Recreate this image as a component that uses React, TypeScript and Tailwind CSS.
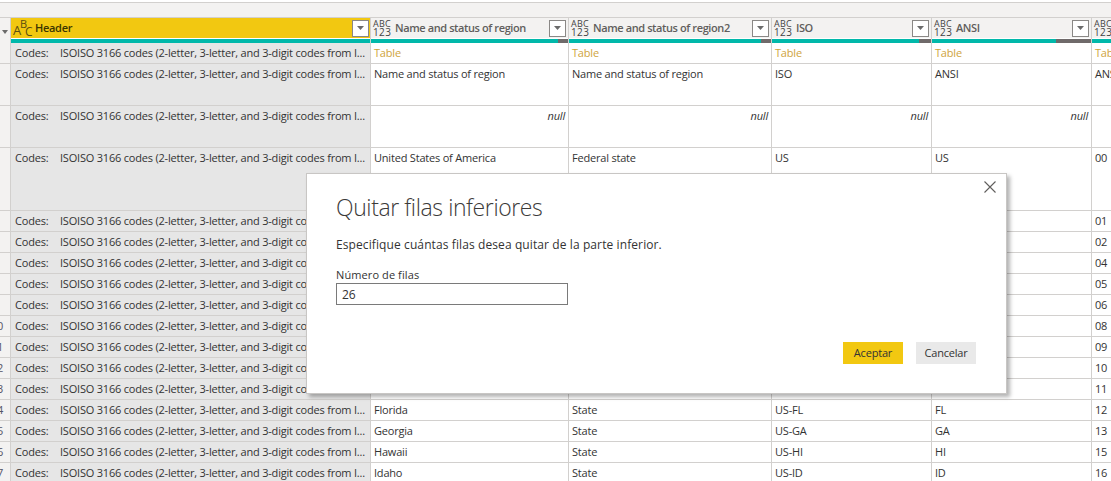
import React from 'react';

const gridCols = 'grid grid-cols-[11px_360px_198px_203px_160px_160px_19px]';
const fontStack = { fontFamily: '"Open Sans", "Noto Sans", sans-serif' };

const codesText = 'ISOISO 3166 codes (2-letter, 3-letter, and 3-digit codes from I...';

type Row = {
    idx: number;
    h: string;
    name?: string;
    status?: string;
    iso?: string;
    ansi?: string;
    last?: string;
    isNull?: boolean;
    gold?: boolean;
};

const rows: Row[] = [
    { idx: 1, h: 'h-[21px]', name: 'Table', status: 'Table', iso: 'Table', ansi: 'Table', last: 'Table', gold: true },
    { idx: 2, h: 'h-[42px]', name: 'Name and status of region', status: 'Name and status of region', iso: 'ISO', ansi: 'ANSI', last: 'ANSI' },
    { idx: 3, h: 'h-[42px]', isNull: true },
    { idx: 4, h: 'h-[63px]', name: 'United States of America', status: 'Federal state', iso: 'US', ansi: 'US', last: '00' },
    { idx: 5, h: 'h-[21px]', name: 'Alabama', status: 'State', iso: 'US-AL', ansi: 'AL', last: '01' },
    { idx: 6, h: 'h-[21px]', name: 'Alaska', status: 'State', iso: 'US-AK', ansi: 'AK', last: '02' },
    { idx: 7, h: 'h-[21px]', name: 'Arizona', status: 'State', iso: 'US-AZ', ansi: 'AZ', last: '04' },
    { idx: 8, h: 'h-[21px]', name: 'Arkansas', status: 'State', iso: 'US-AR', ansi: 'AR', last: '05' },
    { idx: 9, h: 'h-[21px]', name: 'California', status: 'State', iso: 'US-CA', ansi: 'CA', last: '06' },
    { idx: 10, h: 'h-[21px]', name: 'Colorado', status: 'State', iso: 'US-CO', ansi: 'CO', last: '08' },
    { idx: 11, h: 'h-[21px]', name: 'Connecticut', status: 'State', iso: 'US-CT', ansi: 'CT', last: '09' },
    { idx: 12, h: 'h-[21px]', name: 'Delaware', status: 'State', iso: 'US-DE', ansi: 'DE', last: '10' },
    { idx: 13, h: 'h-[21px]', name: 'District of Columbia', status: 'District', iso: 'US-DC', ansi: 'DC', last: '11' },
    { idx: 14, h: 'h-[21px]', name: 'Florida', status: 'State', iso: 'US-FL', ansi: 'FL', last: '12' },
    { idx: 15, h: 'h-[21px]', name: 'Georgia', status: 'State', iso: 'US-GA', ansi: 'GA', last: '13' },
    { idx: 16, h: 'h-[21px]', name: 'Hawaii', status: 'State', iso: 'US-HI', ansi: 'HI', last: '15' },
    { idx: 17, h: 'h-[21px]', name: 'Idaho', status: 'State', iso: 'US-ID', ansi: 'ID', last: '16' },
];

function FilterButton() {
    return (
        <div className="w-[17px] h-[17px] shrink-0 bg-white border border-[#8a8886] flex items-center justify-center">
            <svg width="7" height="4" viewBox="0 0 7 4">
                <path d="M0 0h7L3.5 4z" fill="#6b6b6b" />
            </svg>
        </div>
    );
}

function TypeIcon() {
    return (
        <div className="w-[17px] shrink-0 flex flex-col text-[#444] leading-[9px] font-normal">
            <span className="text-[9px] tracking-[0.2px]">ABC</span>
            <span className="text-[10px] tracking-[0.4px]">123</span>
        </div>
    );
}

function ColumnHeader({ label, teal }: { label: string; teal: string }) {
    return (
        <div className="h-[25px] border-r border-[#d2d0ce] flex flex-col">
            <div className="h-[20px] pl-[2px] pr-[2px] flex items-center bg-[#f3f2f1]">
                <TypeIcon />
                <span className="ml-[5px] flex-1 min-w-0 text-[11px] tracking-[-0.4px] font-semibold text-[#605e5c] whitespace-nowrap">{label}</span>
                <FilterButton />
            </div>
            <div className="mt-[1px] h-[4px] bg-[#6f6a6a]">
                <div className={`h-full bg-[#01b8aa] ${teal}`} />
            </div>
        </div>
    );
}

function Cell({ text, gold, isNull }: { text?: string; gold?: boolean; isNull?: boolean }) {
    if (isNull) {
        return (
            <div className="border-r border-[#d2d0ce] px-[3px] pt-[1px] text-right italic text-[#333] h-full">null</div>
        );
    }
    return (
        <div className={`border-r border-[#d2d0ce] pl-[3px] pt-[1px] h-full overflow-hidden whitespace-nowrap ${gold ? 'text-[#cfa43c]' : 'text-[#333]'}`}>
            {text}
        </div>
    );
}

function DataRow({ row }: { row: Row }) {
    return (
        <div className={`${gridCols} ${row.h} border-b border-[#d2d0ce] text-[11px] tracking-[-0.2px] leading-[18px]`}>
            <div className="bg-[#f3f2f1] border-r border-[#d2d0ce] pr-[7px] pt-[1px] text-[#556] flex justify-end overflow-hidden">
                {/* single digits sit left of the crop, only the tail of two digit numbers shows */}
                <span>{row.idx >= 10 ? row.idx : ''}</span>
            </div>
            <div className="bg-[#e6e6e6] border-r border-[#d2d0ce] pl-[4px] pt-[1px] flex text-[#333] whitespace-nowrap overflow-hidden">
                <span className="w-[45px] shrink-0">Codes:</span>
                <span>{codesText}</span>
            </div>
            <Cell text={row.name} gold={row.gold} isNull={row.isNull} />
            <Cell text={row.status} gold={row.gold} isNull={row.isNull} />
            <Cell text={row.iso} gold={row.gold} isNull={row.isNull} />
            <Cell text={row.ansi} gold={row.gold} isNull={row.isNull} />
            <div className={`pl-[3px] pt-[1px] overflow-hidden whitespace-nowrap ${row.gold ? 'text-[#cfa43c]' : 'text-[#333]'}`}>
                {row.isNull ? '' : row.last}
            </div>
        </div>
    );
}

function RemoveRowsDialog() {
    return (
        <div className="absolute left-[306px] top-[173px] w-[701px] h-[221px] bg-white border border-[#c8c6c4] shadow-[3px_3px_4px_rgba(0,0,0,0.3)] flex flex-col pl-[29px] pr-[29px] text-[#333]">
            <button className="absolute right-[10px] top-[7px] text-[#605e5c]">
                <svg width="12" height="12" viewBox="0 0 12 12">
                    <path d="M0.5 0.5l11 11M11.5 0.5l-11 11" stroke="#605e5c" strokeWidth="1.1" fill="none" />
                </svg>
            </button>
            <h1 className="mt-[15px] text-[23px] tracking-[-0.4px] leading-[36px] font-light text-[#3b3a39]">Quitar filas inferiores</h1>
            <p className="mt-[11px] text-[12px] tracking-[0.1px] leading-[18px]">Especifique cuántas filas desea quitar de la parte inferior.</p>
            <label className="mt-[13px] text-[11px] tracking-[0.1px] leading-[16px]">Número de filas</label>
            <input
                readOnly
                value="26"
                className="w-[232px] h-[22px] border border-[#7a7a7a] px-[5px] text-[12px] outline-none"
            />
            <div className="mt-auto mb-[29px] pr-[1px] flex justify-end gap-[13px]">
                <button className="w-[60px] h-[22px] bg-[#f2c811] text-[11px] tracking-[-0.2px] text-[#333]">Aceptar</button>
                <button className="w-[60px] h-[22px] bg-[#e9e9e9] text-[11px] tracking-[-0.2px] text-[#333]">Cancelar</button>
            </div>
        </div>
    );
}

export default function App() {
    return (
        <div className="relative w-[1111px] h-[481px] overflow-hidden bg-white" style={fontStack}>
            {/* toolbar strip above the grid */}
            <div className="h-[18px] pt-[2px]">
                <div className="h-[16px] bg-[#f3f2f1] border-y border-[#d2d0ce]" />
            </div>

            <div className={gridCols}>
                <div className="h-[25px] bg-[#f3f2f1] border-r border-[#d2d0ce] flex items-center pl-[2px] pt-[2px]">
                    <svg width="6" height="4" viewBox="0 0 6 4">
                        <path d="M0 0h6L3 4z" fill="#6b6b6b" />
                    </svg>
                </div>
                <div className="h-[25px] border-r border-[#d2d0ce] flex flex-col">
                    <div className="h-[20px] bg-[#f2c811] pl-[2px] pr-[1px] flex items-center">
                        <svg width="20" height="19" viewBox="0 0 20 19" className="shrink-0">
                            <text x="0" y="16" fontSize="13" fill="#5b4e10">A</text>
                            <text x="7" y="9" fontSize="11" fill="#5b4e10">B</text>
                            <text x="12" y="17" fontSize="12" fill="#5b4e10">C</text>
                        </svg>
                        <span className="ml-[2px] flex-1 text-[11px] tracking-[-0.3px] font-semibold text-[#3b3500]">Header</span>
                        <FilterButton />
                    </div>
                    <div className="mt-[1px] h-[4px] bg-[#01b8aa]" />
                </div>
                <ColumnHeader label="Name and status of region" teal="w-[187px]" />
                <ColumnHeader label="Name and status of region2" teal="w-[192px]" />
                <ColumnHeader label="ISO" teal="w-[147px]" />
                <ColumnHeader label="ANSI" teal="w-[124px]" />
                <div className="h-[25px] flex flex-col">
                    <div className="h-[20px] pl-[2px] flex items-center bg-[#f3f2f1]">
                        <TypeIcon />
                    </div>
                    <div className="mt-[1px] h-[4px] bg-[#01b8aa]" />
                </div>
            </div>

            {rows.map((row) => (
                <DataRow key={row.idx} row={row} />
            ))}

            <RemoveRowsDialog />
        </div>
    );
}
